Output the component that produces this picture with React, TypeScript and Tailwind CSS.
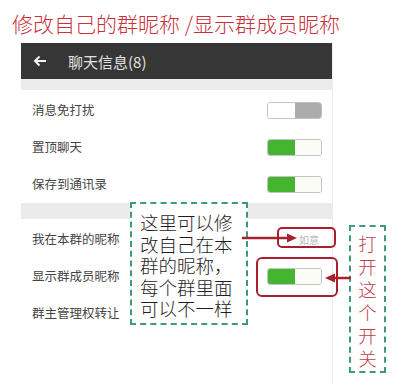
import React from 'react';

const font = { fontFamily: '"Noto Sans CJK SC", "Noto Sans", sans-serif' };

function Toggle({ on }: { on: boolean }) {
  return (
    <div className="w-[55px] h-[17px] rounded-[3px] border border-[#c4c4c4] overflow-hidden flex">
      <div className={on ? 'w-1/2 bg-[#45b52f]' : 'w-1/2 bg-white'} />
      <div className={on ? 'w-1/2 bg-[#fcfcf6]' : 'w-1/2 bg-[#ababab]'} />
    </div>
  );
}

function Row({ label, children }: { label: string; children?: React.ReactNode }) {
  return (
    <div className="h-[37px] flex items-center justify-between pl-[11px] pr-[10px]">
      <span className="text-[12.5px] text-[#454545] leading-none">{label}</span>
      {children}
    </div>
  );
}

export default function App() {
  return (
    <div className="relative w-[394px] h-[383px] bg-white overflow-hidden flex flex-col" style={font}>
      <div className="h-[43px] pt-[12px] pl-[12px] text-[21px] leading-[22px] font-light text-[#c8303c] whitespace-nowrap">
        修改自己的群昵称 /显示群成员昵称
      </div>

      <div className="ml-[21px] w-[312px] flex-1 flex flex-col border-r border-[#ececec]">
        <div className="h-[36px] bg-[#363636] flex items-center">
          <svg width="14" height="12" viewBox="0 0 14 12" className="ml-[12px]">
            <path d="M13 6H2M6.5 1.5L2 6l4.5 4.5" stroke="#f2f2f2" strokeWidth="2" fill="none" />
          </svg>
          <span className="ml-[21px] text-[15px] text-[#e2e2e2] leading-none">聊天信息(8)</span>
        </div>
        <div className="h-[11px] bg-[#ececec]" />

        <div className="pt-[2px]">
          <Row label="消息免打扰">
            <Toggle on={false} />
          </Row>
          <Row label="置顶聊天">
            <Toggle on />
          </Row>
          <Row label="保存到通讯录">
            <Toggle on />
          </Row>
        </div>
        <div className="h-[16px] bg-[#ebebeb]" />
        <div className="pt-[2px]">
          <Row label="我在本群的昵称">
            <span className="text-[10px] text-[#b9b9b9] mr-[3px] leading-none">如意</span>
          </Row>
          <Row label="显示群成员昵称">
            <Toggle on />
          </Row>
          <Row label="群主管理权转让" />
        </div>
      </div>

      {/* annotations */}
      <div className="absolute left-[130px] top-[202px] w-[118px] h-[123px] border-2 border-dashed border-[#3d9a7c] bg-white pl-[8px] pt-[8px] text-[18.5px] leading-[21.5px] font-light text-[#1e1e1e]">
        这里可以修
        <br />
        改自己在本
        <br />
        群的昵称，
        <br />
        每个群里面
        <br />
        可以不一样
      </div>

      <div className="absolute left-[349px] top-[225px] w-[37px] h-[148px] border-2 border-dashed border-[#3d9a7c] flex flex-col items-center pt-[5px] text-[18.5px] leading-[23px] font-light text-[#c0404c]">
        <span>打</span>
        <span>开</span>
        <span>这</span>
        <span>个</span>
        <span>开</span>
        <span>关</span>
      </div>

      <div className="absolute left-[277px] top-[227px] w-[59px] h-[21px] border-2 border-[#a8202e] rounded-[5px]" />
      <div className="absolute left-[256px] top-[257px] w-[82px] h-[40px] border-2 border-[#a8202e] rounded-[6px]" />

      <svg className="absolute left-0 top-0" width="394" height="383">
        <path d="M242 238H289" stroke="#a8202e" strokeWidth="2.5" />
        <path d="M297 238L287 233.5V242.5Z" fill="#a8202e" />
        <path d="M351 278H333" stroke="#a8202e" strokeWidth="2.5" />
        <path d="M325 278L335 273.5V282.5Z" fill="#a8202e" />
      </svg>
    </div>
  );
}
